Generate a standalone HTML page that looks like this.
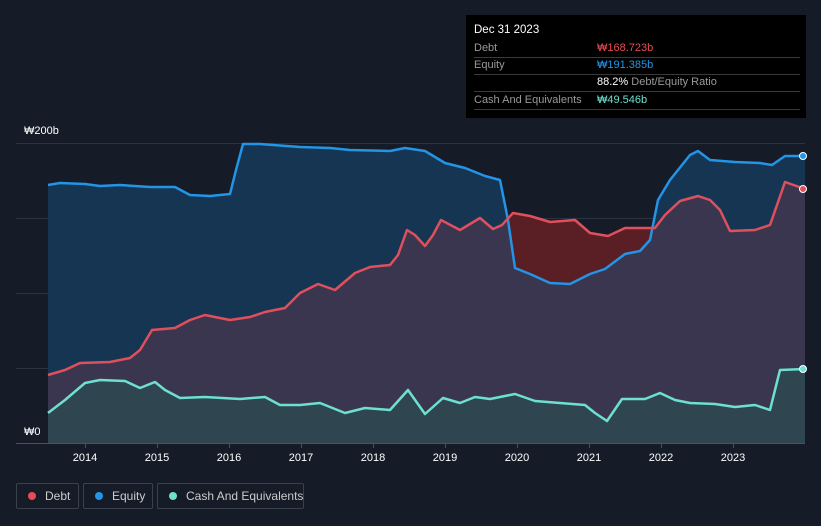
<!DOCTYPE html><html><head><style>
body{margin:0;background:#151b27;width:821px;height:526px;overflow:hidden;font-family:"Liberation Sans",sans-serif;position:relative}
.tt{position:absolute;left:466px;top:15px;width:340px;height:103px;background:#000;color:#fff;font-size:11px}
.tt .r{position:absolute;left:8px;right:6px;height:17px;border-bottom:1px solid #3a3a3a;line-height:17px}
.lab{color:#999}.v{position:absolute;left:123px}
.leg{position:absolute;top:483px;height:26px;border:1px solid #3a414d;border-radius:2px;color:#ccc;font-size:12px;line-height:24px;box-sizing:border-box;white-space:nowrap}
.leg i{position:absolute;left:11px;top:8px;width:8px;height:8px;border-radius:50%}
.ax{position:absolute;color:#fff;font-size:11px}
</style></head><body>
<svg width="821" height="526" style="position:absolute;left:0;top:0">
<defs><clipPath id="ab"><path d="M48,185 L60,183 L85,184 L100,186 L120,185 L150,187 L175,187 L190,195 L210,196 L230,194 L236,170 L243,144 L260,144 L300,147 L330,148 L350,150 L390,151 L405,148 L425,151 L445,163 L465,168 L485,176 L500,180 L508,220 L515,268 L530,274 L550,283 L570,284 L590,274 L605,269 L625,254 L640,251 L650,240 L658,200 L670,180 L690,155 L698,151 L710,160 L735,162 L760,163 L772,165 L785,156 L805,156 L805,100 L48,100Z"/></clipPath></defs>
<g stroke="#2c3340" stroke-width="1"><line x1="16" x2="805" y1="143.5" y2="143.5"/><line x1="16" x2="805" y1="218.5" y2="218.5"/><line x1="16" x2="805" y1="293.5" y2="293.5"/><line x1="16" x2="805" y1="368.5" y2="368.5"/><line x1="16" x2="805" y1="443.5" y2="443.5" stroke="#4a5260"/></g>
<path fill="#163552" d="M48,185 L60,183 L85,184 L100,186 L120,185 L150,187 L175,187 L190,195 L210,196 L230,194 L236,170 L243,144 L260,144 L300,147 L330,148 L350,150 L390,151 L405,148 L425,151 L445,163 L465,168 L485,176 L500,180 L508,220 L515,268 L530,274 L550,283 L570,284 L590,274 L605,269 L625,254 L640,251 L650,240 L658,200 L670,180 L690,155 L698,151 L710,160 L735,162 L760,163 L772,165 L785,156 L805,156 L805,443 L48,443Z"/>
<path fill="#3b3650" d="M48,375 L65,370 L80,363 L110,362 L130,358 L140,350 L152,330 L175,328 L190,320 L205,315 L230,320 L250,317 L265,312 L285,308 L300,293 L318,284 L335,290 L355,273 L370,267 L390,265 L398,255 L407,230 L415,235 L425,246 L433,235 L441,220 L460,230 L480,218 L493,229 L502,225 L513,213 L530,216 L550,222 L575,220 L590,233 L608,236 L625,228 L655,228 L665,215 L680,201 L698,196 L710,200 L720,210 L730,231 L755,230 L770,225 L785,182 L805,189 L805,443 L48,443Z"/>
<path clip-path="url(#ab)" fill="#5a1f24" d="M48,375 L65,370 L80,363 L110,362 L130,358 L140,350 L152,330 L175,328 L190,320 L205,315 L230,320 L250,317 L265,312 L285,308 L300,293 L318,284 L335,290 L355,273 L370,267 L390,265 L398,255 L407,230 L415,235 L425,246 L433,235 L441,220 L460,230 L480,218 L493,229 L502,225 L513,213 L530,216 L550,222 L575,220 L590,233 L608,236 L625,228 L655,228 L665,215 L680,201 L698,196 L710,200 L720,210 L730,231 L755,230 L770,225 L785,182 L805,189 L805,443 L48,443Z"/>
<path fill="#2f4650" d="M48,413 L65,400 L85,383 L100,380 L125,381 L140,388 L155,382 L165,390 L180,398 L205,397 L240,399 L265,397 L280,405 L300,405 L320,403 L345,413 L365,408 L390,410 L408,390 L425,414 L443,398 L460,403 L475,397 L490,399 L515,394 L535,401 L560,403 L585,405 L595,413 L607,421 L622,399 L645,399 L660,393 L675,400 L690,403 L715,404 L735,407 L755,405 L770,410 L780,370 L805,369 L805,443 L48,443Z"/>
<g fill="none" stroke-width="2.5" stroke-linejoin="round">
<path stroke="#2394e6" d="M48,185 L60,183 L85,184 L100,186 L120,185 L150,187 L175,187 L190,195 L210,196 L230,194 L236,170 L243,144 L260,144 L300,147 L330,148 L350,150 L390,151 L405,148 L425,151 L445,163 L465,168 L485,176 L500,180 L508,220 L515,268 L530,274 L550,283 L570,284 L590,274 L605,269 L625,254 L640,251 L650,240 L658,200 L670,180 L690,155 L698,151 L710,160 L735,162 L760,163 L772,165 L785,156 L805,156"/>
<path stroke="#e0505c" d="M48,375 L65,370 L80,363 L110,362 L130,358 L140,350 L152,330 L175,328 L190,320 L205,315 L230,320 L250,317 L265,312 L285,308 L300,293 L318,284 L335,290 L355,273 L370,267 L390,265 L398,255 L407,230 L415,235 L425,246 L433,235 L441,220 L460,230 L480,218 L493,229 L502,225 L513,213 L530,216 L550,222 L575,220 L590,233 L608,236 L625,228 L655,228 L665,215 L680,201 L698,196 L710,200 L720,210 L730,231 L755,230 L770,225 L785,182 L805,189"/>
<path stroke="#6de0d0" d="M48,413 L65,400 L85,383 L100,380 L125,381 L140,388 L155,382 L165,390 L180,398 L205,397 L240,399 L265,397 L280,405 L300,405 L320,403 L345,413 L365,408 L390,410 L408,390 L425,414 L443,398 L460,403 L475,397 L490,399 L515,394 L535,401 L560,403 L585,405 L595,413 L607,421 L622,399 L645,399 L660,393 L675,400 L690,403 L715,404 L735,407 L755,405 L770,410 L780,370 L805,369"/>
</g>
<circle cx="803" cy="156" r="3.5" fill="#2394e6" stroke="#fff" stroke-width="1"/>
<circle cx="803" cy="189" r="3.5" fill="#e0505c" stroke="#fff" stroke-width="1"/>
<circle cx="803" cy="369" r="3.5" fill="#6de0d0" stroke="#fff" stroke-width="1"/>
<g stroke="#4a5260"><line x1="85.5" x2="85.5" y1="443" y2="448"/><line x1="157.5" x2="157.5" y1="443" y2="448"/><line x1="229.5" x2="229.5" y1="443" y2="448"/><line x1="301.5" x2="301.5" y1="443" y2="448"/><line x1="373.5" x2="373.5" y1="443" y2="448"/><line x1="445.5" x2="445.5" y1="443" y2="448"/><line x1="517.5" x2="517.5" y1="443" y2="448"/><line x1="589.5" x2="589.5" y1="443" y2="448"/><line x1="661.5" x2="661.5" y1="443" y2="448"/><line x1="733.5" x2="733.5" y1="443" y2="448"/></g>
<g fill="#fff" font-size="11" text-anchor="middle" font-family="Liberation Sans"><text x="85" y="461">2014</text><text x="157" y="461">2015</text><text x="229" y="461">2016</text><text x="301" y="461">2017</text><text x="373" y="461">2018</text><text x="445" y="461">2019</text><text x="517" y="461">2020</text><text x="589" y="461">2021</text><text x="661" y="461">2022</text><text x="733" y="461">2023</text></g>
</svg>
<div class="ax" style="left:24px;top:125px">₩200b</div>
<div class="ax" style="left:16px;top:423px;background:#151b27;width:32px;padding-left:8px;height:19px;line-height:19px;box-sizing:border-box">₩0</div>
<div class="tt">
<div style="position:absolute;left:8px;top:9px;font-size:11.5px">Dec 31 2023</div>
<div class="r" style="top:25px"><span class="lab">Debt</span><span class="v" style="color:#e84b55">₩168.723b</span></div>
<div class="r" style="top:42px"><span class="lab">Equity</span><span class="v" style="color:#2394e6">₩191.385b</span></div>
<div class="r" style="top:59px;border:none"><span class="v"><b style="font-weight:normal;color:#fff">88.2%</b> <span class="lab">Debt/Equity Ratio</span></span></div>
<div class="r" style="top:76px;border-top:1px solid #3a3a3a"><span class="lab">Cash And Equivalents</span><span class="v" style="color:#6de0d0">₩49.546b</span></div>
</div>
<div class="leg" style="left:16px;width:63px"><i style="background:#e84b55"></i><span style="margin-left:28px">Debt</span></div>
<div class="leg" style="left:83px;width:70px"><i style="background:#2394e6"></i><span style="margin-left:28px">Equity</span></div>
<div class="leg" style="left:157px;width:147px"><i style="background:#6de0d0"></i><span style="margin-left:28px">Cash And Equivalents</span></div>
</body></html>
